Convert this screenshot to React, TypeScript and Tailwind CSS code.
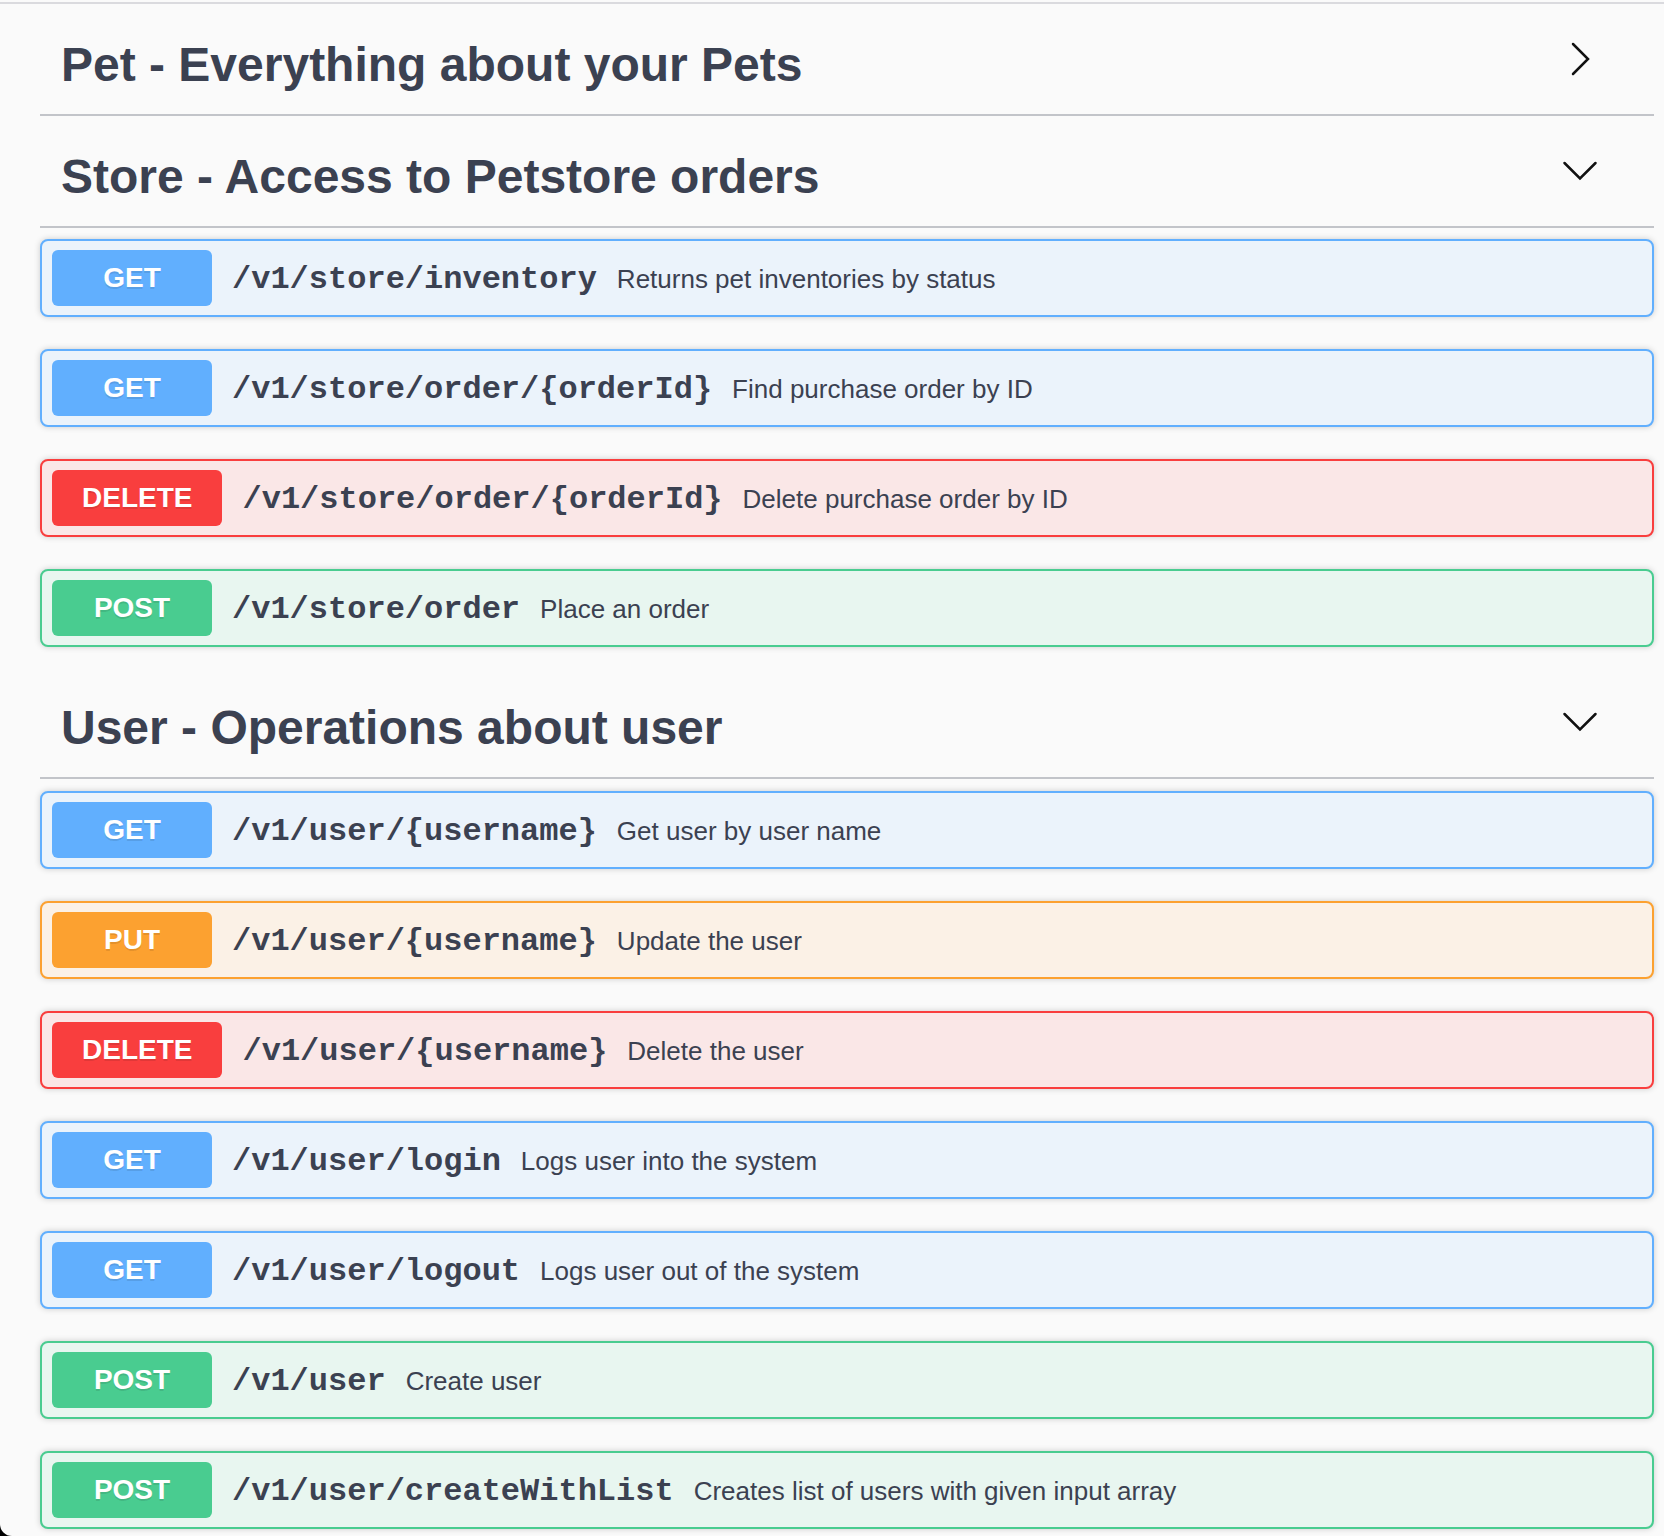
import React from 'react';

type Method = 'GET' | 'POST' | 'PUT' | 'DELETE';

interface Op {
  method: Method;
  path: string;
  summary: string;
}

const methodStyles: Record<Method, { card: string; badge: string }> = {
  GET: { card: 'border-[#61affe] bg-[#ebf3fb]', badge: 'bg-[#61affe]' },
  POST: { card: 'border-[#49cc90] bg-[#e8f6f0]', badge: 'bg-[#49cc90]' },
  PUT: { card: 'border-[#fca130] bg-[#fbf1e6]', badge: 'bg-[#fca130]' },
  DELETE: { card: 'border-[#f93e3e] bg-[#fae7e7]', badge: 'bg-[#f93e3e]' },
};

const storeOps: Op[] = [
  { method: 'GET', path: '/v1/store/inventory', summary: 'Returns pet inventories by status' },
  { method: 'GET', path: '/v1/store/order/{orderId}', summary: 'Find purchase order by ID' },
  { method: 'DELETE', path: '/v1/store/order/{orderId}', summary: 'Delete purchase order by ID' },
  { method: 'POST', path: '/v1/store/order', summary: 'Place an order' },
];

const userOps: Op[] = [
  { method: 'GET', path: '/v1/user/{username}', summary: 'Get user by user name' },
  { method: 'PUT', path: '/v1/user/{username}', summary: 'Update the user' },
  { method: 'DELETE', path: '/v1/user/{username}', summary: 'Delete the user' },
  { method: 'GET', path: '/v1/user/login', summary: 'Logs user into the system' },
  { method: 'GET', path: '/v1/user/logout', summary: 'Logs user out of the system' },
  { method: 'POST', path: '/v1/user', summary: 'Create user' },
  { method: 'POST', path: '/v1/user/createWithList', summary: 'Creates list of users with given input array' },
];

const Chevron = ({ open }: { open: boolean }) => (
  <svg width="40" height="40" viewBox="0 0 40 40" fill="none" stroke="#111" strokeWidth="2.5" strokeLinecap="round" strokeLinejoin="miter">
    {open ? <polyline points="4.5,12 20,27.5 35.5,12" /> : <polyline points="13,5 28,20 13,35" />}
  </svg>
);

const TagRow = ({ title, open }: { title: string; open: boolean }) => (
  <div className="flex items-center justify-between h-[112px] pl-[21px] pr-[54px] border-b-2 border-[#c2c4c9]">
    <h2 className="pt-[11px] text-[48px] leading-[48px] font-bold text-[#3b4151]">{title}</h2>
    <Chevron open={open} />
  </div>
);

const OpCard = ({ op }: { op: Op }) => {
  const s = methodStyles[op.method];
  return (
    <div className={`flex items-center h-[78px] px-[10px] border-2 rounded-[8px] shadow-[0_0_6px_rgba(0,0,0,0.19)] ${s.card}`}>
      <span className={`flex items-center justify-center h-[56px] min-w-[160px] px-[30px] rounded-[6px] text-white text-[28px] font-bold [text-shadow:0_2px_0_rgba(0,0,0,0.1)] ${s.badge}`}>
        {op.method}
      </span>
      <span className="flex items-baseline pt-[3px] leading-[40px] text-[#3b4151] whitespace-nowrap">
        <span className="px-[20px] font-['Liberation_Mono',monospace] font-bold text-[32px]">{op.path}</span>
        <span className="text-[26px]">{op.summary}</span>
      </span>
    </div>
  );
};

export default function App() {
  return (
    <div className="relative h-[1536px] overflow-hidden bg-[#fafafa] pt-[2px] font-['Liberation_Sans',Arial,sans-serif]">
      <div className="h-[2px] bg-[#dadade]" />
      <div className="pl-[40px] pr-[10px]">
        <TagRow title="Pet - Everything about your Pets" open={false} />
        <TagRow title="Store - Access to Petstore orders" open={true} />
        <div className="mt-[11px] flex flex-col gap-[32px]">
          {storeOps.map((op, i) => (
            <OpCard key={i} op={op} />
          ))}
        </div>
        <div className="mt-[20px]">
          <TagRow title="User - Operations about user" open={true} />
        </div>
        <div className="mt-[12px] flex flex-col gap-[32px]">
          {userOps.map((op, i) => (
            <OpCard key={i} op={op} />
          ))}
        </div>
      </div>
      <div className="absolute left-0 bottom-0 w-[12px] h-[12px] bg-black">
        <div className="w-full h-full bg-[#fafafa] rounded-bl-[12px]" />
      </div>
    </div>
  );
}
